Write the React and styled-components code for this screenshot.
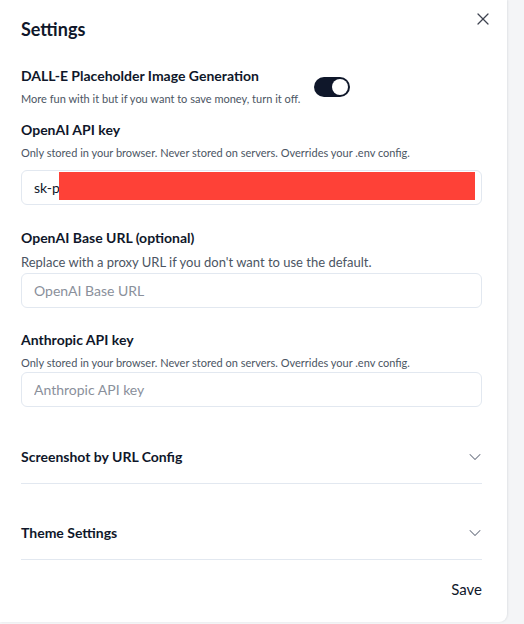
import React from 'react'
import styled, { createGlobalStyle } from 'styled-components'
import { X, ChevronDown } from 'lucide-react'

const GlobalStyle = createGlobalStyle`
  html, body {
    margin: 0;
    padding: 0;
    background: #f4f5f7;
  }
  * {
    box-sizing: border-box;
  }
`

const Page = styled.div`
  width: 524px;
  height: 624px;
  background: #f4f5f7;
  font-family: Lato, 'Noto Sans', sans-serif;
  color: #0f172a;
`

const Dialog = styled.div`
  width: 507px;
  height: 622px;
  background: #fff;
  border-bottom-right-radius: 8px;
  box-shadow: 1px 0 2px rgba(15, 23, 42, 0.08);
  padding: 18px 25px 0 21px;
  display: flex;
  flex-direction: column;
`

const Header = styled.div`
  display: flex;
  justify-content: space-between;
  align-items: flex-start;
`

const Title = styled.h2`
  margin: 0;
  font-size: 18px;
  line-height: 22px;
  font-weight: 700;
`

const CloseButton = styled.button`
  border: 0;
  background: none;
  padding: 0;
  margin: -9px -11px 0 0;
  width: 20px;
  height: 20px;
  color: #3f4450;
  display: flex;
`

const ToggleRow = styled.div`
  display: flex;
  align-items: center;
  gap: 10px;
  margin-top: 27px;
`

const Field = styled.div`
  display: flex;
  flex-direction: column;
  margin-top: ${p => p.$top}px;
`

const Label = styled.div`
  font-size: 14px;
  line-height: 18px;
  font-weight: 700;
`

const Hint = styled.div`
  font-size: ${p => (p.$large ? 13 : 11)}px;
  line-height: ${p => (p.$large ? 20 : 16)}px;
  color: #4b5563;
  margin-top: ${p => (p.$large ? 5 : 6)}px;
`

const Switch = styled.div`
  width: 36px;
  height: 20px;
  border-radius: 10px;
  background: #0f172a;
  display: flex;
  align-items: center;
  justify-content: flex-end;
  padding: 2px;
  margin-left: ${p => p.$offset}px;
  flex-shrink: 0;
`

const Thumb = styled.div`
  width: 16px;
  height: 16px;
  border-radius: 50%;
  background: #fff;
`

const InputWrap = styled.div`
  position: relative;
  margin-top: ${p => p.$top}px;
`

const Input = styled.input`
  width: 100%;
  height: 35px;
  border: 1px solid #e2e8f0;
  border-radius: 6px;
  padding: 0 12px;
  font-family: Lato, 'Noto Sans', sans-serif;
  font-size: 14px;
  color: #0f172a;
  background: #fff;
  outline: none;

  &::placeholder {
    color: #8a909b;
  }
`

const Redaction = styled.div`
  position: absolute;
  left: 38px;
  top: 2px;
  width: 416px;
  height: 28px;
  background: #fe4137;
`

const AccordionItem = styled.div`
  border-bottom: 1px solid #e2e8f0;
  margin-top: ${p => p.$top}px;
`

const Trigger = styled.div`
  display: flex;
  align-items: center;
  justify-content: space-between;
  padding: 17px 0 16px;
  font-size: 14px;
  line-height: 18px;
  font-weight: 700;
  color: #0f172a;

  svg {
    color: #6b7280;
    margin-right: -3px;
  }
`

const Footer = styled.div`
  display: flex;
  justify-content: flex-end;
  margin-top: 19px;
`

const SaveButton = styled.button`
  border: 0;
  background: none;
  padding: 0;
  font-family: Lato, 'Noto Sans', sans-serif;
  font-size: 15px;
  line-height: 20px;
  color: #0f172a;
`

export default function App() {
  return (
    <Page>
      <GlobalStyle />
      <Dialog>
        <Header>
          <Title>Settings</Title>
          <CloseButton>
            <X size={20} strokeWidth={1.5} />
          </CloseButton>
        </Header>

        <ToggleRow>
          <div>
            <Label>DALL-E Placeholder Image Generation</Label>
            <Hint>More fun with it but if you want to save money, turn it off.</Hint>
          </div>
          <Switch $offset={4}>
            <Thumb />
          </Switch>
        </ToggleRow>

        <Field $top={14}>
          <Label>OpenAI API key</Label>
          <Hint>Only stored in your browser. Never stored on servers. Overrides your .env config.</Hint>
          <InputWrap $top={9}>
            <Input defaultValue="sk-proj-xxxxxxxxxxxxxxxxxxxxxxxxxxxxxxxxxxxxxxxxxxxxxxxxxxxxxxxxxxxxx" />
            <Redaction />
          </InputWrap>
        </Field>

        <Field $top={24}>
          <Label>OpenAI Base URL (optional)</Label>
          <Hint $large>Replace with a proxy URL if you don't want to use the default.</Hint>
          <InputWrap $top={1}>
            <Input placeholder="OpenAI Base URL" />
          </InputWrap>
        </Field>

        <Field $top={23}>
          <Label>Anthropic API key</Label>
          <Hint>Only stored in your browser. Never stored on servers. Overrides your .env config.</Hint>
          <InputWrap $top={1}>
            <Input placeholder="Anthropic API key" />
          </InputWrap>
        </Field>

        <AccordionItem $top={23}>
          <Trigger>
            Screenshot by URL Config
            <ChevronDown size={20} strokeWidth={1.25} />
          </Trigger>
        </AccordionItem>

        <AccordionItem $top={22}>
          <Trigger>
            Theme Settings
            <ChevronDown size={20} strokeWidth={1.25} />
          </Trigger>
        </AccordionItem>

        <Footer>
          <SaveButton>Save</SaveButton>
        </Footer>
      </Dialog>
    </Page>
  )
}
